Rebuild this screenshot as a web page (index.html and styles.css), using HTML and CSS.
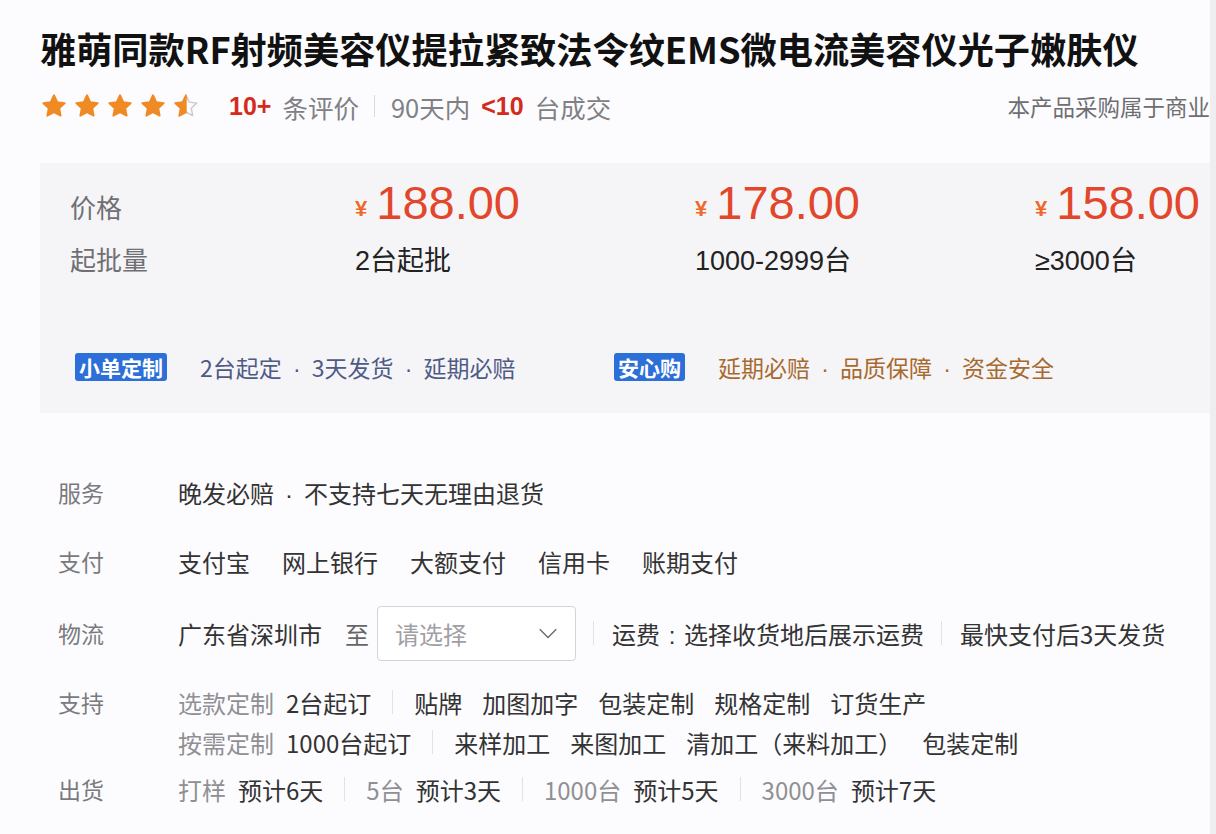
FILE: index.html
```html
<!DOCTYPE html>
<html lang="zh-CN">
<head>
<meta charset="utf-8">
<title>雅萌同款RF射频美容仪</title>
<link rel="stylesheet" href="styles.css">
</head>
<body>
<div class="page">
  <h1 class="title">雅萌同款RF射频美容仪提拉紧致法令纹EMS微电流美容仪光子嫩肤仪</h1>

  <div class="meta">
    <div class="stars">
      <svg class="star" viewBox="0 0 24 24"><path class="star-full" d="M12 2.8l2.8 5.9 6.4.8-4.7 4.4 1.2 6.4L12 17.2l-5.7 3.1 1.2-6.4-4.7-4.4 6.4-.8z"/></svg>
      <svg class="star" viewBox="0 0 24 24"><path class="star-full" d="M12 2.8l2.8 5.9 6.4.8-4.7 4.4 1.2 6.4L12 17.2l-5.7 3.1 1.2-6.4-4.7-4.4 6.4-.8z"/></svg>
      <svg class="star" viewBox="0 0 24 24"><path class="star-full" d="M12 2.8l2.8 5.9 6.4.8-4.7 4.4 1.2 6.4L12 17.2l-5.7 3.1 1.2-6.4-4.7-4.4 6.4-.8z"/></svg>
      <svg class="star" viewBox="0 0 24 24"><path class="star-full" d="M12 2.8l2.8 5.9 6.4.8-4.7 4.4 1.2 6.4L12 17.2l-5.7 3.1 1.2-6.4-4.7-4.4 6.4-.8z"/></svg>
      <svg class="star" viewBox="0 0 24 24">
        <defs><clipPath id="half-left"><rect x="0" y="0" width="12.6" height="24"/></clipPath></defs>
        <path class="star-empty" d="M12 2.8l2.8 5.9 6.4.8-4.7 4.4 1.2 6.4L12 17.2l-5.7 3.1 1.2-6.4-4.7-4.4 6.4-.8z"/>
        <path class="star-full" clip-path="url(#half-left)" d="M12 2.8l2.8 5.9 6.4.8-4.7 4.4 1.2 6.4L12 17.2l-5.7 3.1 1.2-6.4-4.7-4.4 6.4-.8z"/>
      </svg>
    </div>
    <span class="meta-hl">10+</span>
    <span class="meta-muted">条评价</span>
    <span class="meta-sep"></span>
    <span class="meta-muted">90天内</span>
    <span class="meta-hl">&lt;10</span>
    <span class="meta-muted">台成交</span>
    <span class="meta-notice">本产品采购属于商业</span>
  </div>

  <div class="pricebox">
    <div class="price-grid">
      <div class="pb-label">价格</div>
      <div class="price"><span class="yen">¥</span>188.00</div>
      <div class="price"><span class="yen">¥</span>178.00</div>
      <div class="price"><span class="yen">¥</span>158.00</div>
      <div class="pb-label">起批量</div>
      <div class="qty">2台起批</div>
      <div class="qty">1000-2999台</div>
      <div class="qty">≥3000台</div>
    </div>
    <div class="badges">
      <div class="badge-group">
        <span class="badge">小单定制</span>
        <span class="badge-text">2台起定<span class="dot">·</span>3天发货<span class="dot">·</span>延期必赔</span>
      </div>
      <div class="badge-group">
        <span class="badge">安心购</span>
        <span class="badge-text badge-text-gold">延期必赔<span class="dot">·</span>品质保障<span class="dot">·</span>资金安全</span>
      </div>
    </div>
  </div>

  <div class="specs">
    <div class="spec-row spec-service">
      <div class="spec-label">服务</div>
      <div class="spec-values">
        <span class="val">晚发必赔<span class="dot">·</span>不支持七天无理由退货</span>
      </div>
    </div>

    <div class="spec-row spec-pay">
      <div class="spec-label">支付</div>
      <div class="spec-values pay-list">
        <span class="val">支付宝</span>
        <span class="val">网上银行</span>
        <span class="val">大额支付</span>
        <span class="val">信用卡</span>
        <span class="val">账期支付</span>
      </div>
    </div>

    <div class="spec-row spec-logistics">
      <div class="spec-label">物流</div>
      <div class="spec-values">
        <span class="val">广东省深圳市</span>
        <span class="to">至</span>
        <div class="select">
          <span class="select-ph">请选择</span>
          <svg class="chevron" viewBox="0 0 24 24"><polyline points="3,8 12,17 21,8"/></svg>
        </div>
        <span class="vsep vsep-log"></span>
        <span class="val">运费<span class="colon">:</span>选择收货地后展示运费</span>
        <span class="vsep vsep-log"></span>
        <span class="val">最快支付后3天发货</span>
      </div>
    </div>

    <div class="spec-row spec-support">
      <div class="spec-label">支持</div>
      <div class="spec-lines">
        <div class="spec-values">
          <span class="pair"><span class="muted">选款定制</span><span class="val">2台起订</span></span>
          <span class="vsep"></span>
          <span class="tags">
            <span class="val">贴牌</span>
            <span class="val">加图加字</span>
            <span class="val">包装定制</span>
            <span class="val">规格定制</span>
            <span class="val">订货生产</span>
          </span>
        </div>
        <div class="spec-values">
          <span class="pair"><span class="muted">按需定制</span><span class="val">1000台起订</span></span>
          <span class="vsep"></span>
          <span class="tags">
            <span class="val">来样加工</span>
            <span class="val">来图加工</span>
            <span class="val">清加工（来料加工）</span>
            <span class="val">包装定制</span>
          </span>
        </div>
      </div>
    </div>

    <div class="spec-row spec-ship">
      <div class="spec-label">出货</div>
      <div class="spec-values">
        <span class="pair"><span class="muted">打样</span><span class="val">预计6天</span></span>
        <span class="vsep"></span>
        <span class="pair"><span class="muted">5台</span><span class="val">预计3天</span></span>
        <span class="vsep"></span>
        <span class="pair"><span class="muted">1000台</span><span class="val">预计5天</span></span>
        <span class="vsep"></span>
        <span class="pair"><span class="muted">3000台</span><span class="val">预计7天</span></span>
      </div>
    </div>
  </div>
</div>
</body>
</html>
```

FILE: styles.css
```css
* { box-sizing: border-box; }

html, body {
  margin: 0;
  padding: 0;
}

body {
  background: #eeeef1;
  font-family: "Noto Sans CJK SC", "Noto Sans", sans-serif;
  color: #333;
  width: 1216px;
  height: 834px;
  overflow: hidden;
}

.page {
  width: 1210px;
  height: 834px;
  background: #fcfcfe;
  overflow: hidden;
  padding-left: 40px;
  padding-top: 21px;
}

.title {
  margin: 0;
  font-size: 36.2px;
  line-height: 54px;
  font-weight: 700;
  color: #111;
  white-space: nowrap;
}

.meta {
  display: flex;
  align-items: center;
  height: 40px;
  margin-top: 11px;
  white-space: nowrap;
  font-size: 25.5px;
}

.stars {
  display: flex;
  gap: 5px;
  margin-right: 29px;
}

.star {
  width: 28px;
  height: 28px;
  display: block;
}

.star-full {
  fill: #f08a24;
  stroke: #f08a24;
  stroke-width: 1.6;
  stroke-linejoin: round;
}

.star-empty {
  fill: none;
  stroke: #c9c9cc;
  stroke-width: 1.2;
  stroke-linejoin: round;
}

.meta-hl {
  color: #d42a20;
  font-weight: 700;
  font-family: "Liberation Sans", "Noto Sans CJK SC", sans-serif;
  font-size: 25px;
  margin-right: 11px;
}

.meta-muted {
  color: #808085;
  margin-right: 11px;
}

.meta-sep {
  width: 1px;
  height: 22px;
  background: #dadade;
  margin: 0 16px 0 4px;
}

.meta-notice {
  margin-left: auto;
  color: #6e6e72;
  font-size: 22.5px;
}

.pricebox {
  margin-top: 37px;
  background: #f5f5f8;
  width: 1180px;
  padding: 17px 0 22px 30px;
}

.price-grid {
  display: grid;
  grid-template-columns: 285px 340px 340px 340px;
  grid-template-rows: 52px 36px;
  row-gap: 8px;
  align-items: center;
}

.pb-label {
  font-size: 26px;
  color: #707074;
}

.price {
  font-family: "Liberation Sans", Arial, sans-serif;
  font-size: 47px;
  color: #e2462b;
  line-height: 52px;
  white-space: nowrap;
}

.yen {
  font-size: 22px;
  color: #ee6a2c;
  margin-right: 9px;
  font-weight: 700;
  vertical-align: 3px;
}

.qty {
  font-family: "Liberation Sans", "Noto Sans CJK SC", sans-serif;
  font-size: 27px;
  color: #222;
  white-space: nowrap;
}

.badges {
  display: flex;
  align-items: center;
  height: 48px;
  margin-top: 67px;
  padding-left: 5px;
}

.badge-group {
  display: flex;
  align-items: center;
  width: 539px;
  white-space: nowrap;
}

.badge {
  background: #2d6fd8;
  color: #fff;
  font-weight: 700;
  font-size: 21px;
  line-height: 28px;
  padding: 0 4px;
  border-radius: 3px;
  margin-right: 33px;
}

.badge-text {
  font-size: 23px;
  color: #4f5a86;
}

.badge-text-gold {
  color: #a8692e;
}

.dot {
  display: inline-block;
  width: 30px;
  text-align: center;
  font-family: "Liberation Sans", sans-serif;
}

.colon {
  display: inline-block;
  width: 24px;
  text-align: center;
  font-family: "Liberation Sans", sans-serif;
}

.specs {
  padding-left: 18px;
  margin-top: 59px;
  font-size: 24px;
}

.spec-row {
  display: flex;
  align-items: flex-start;
  white-space: nowrap;
}

.spec-label {
  width: 120px;
  flex: none;
  color: #7a7a7e;
  height: 40px;
  line-height: 40px;
  font-size: 23px;
}

.spec-values {
  display: flex;
  align-items: center;
  height: 40px;
}

.val {
  color: #333;
}

.muted {
  color: #909094;
}

.pay-list {
  gap: 32px;
}

.spec-pay {
  margin-top: 29px;
}

.spec-logistics {
  margin-top: 24px;
  align-items: center;
}

.spec-logistics .spec-values {
  height: 56px;
}

.to {
  color: #666;
  margin: 0 8px 0 23px;
}

.select {
  width: 199px;
  height: 55px;
  border: 1px solid #d4d4d8;
  border-radius: 4px;
  background: #fff;
  display: flex;
  align-items: center;
  justify-content: space-between;
  padding: 0 16px 0 17px;
}

.select-ph {
  color: #a0a0a4;
}

.chevron {
  width: 22px;
  height: 22px;
  fill: none;
  stroke: #6a6a6e;
  stroke-width: 1.5;
}

.vsep {
  width: 1px;
  height: 24px;
  background: #e2e2e6;
  margin: 0 21px;
  flex: none;
}

.vsep-log {
  margin: 0 18px 0 17px;
}

.spec-support {
  margin-top: 21px;
}

.pair {
  display: flex;
  gap: 12px;
}

.tags {
  display: flex;
  gap: 20px;
}

.spec-ship {
  margin-top: 7px;
}
```
